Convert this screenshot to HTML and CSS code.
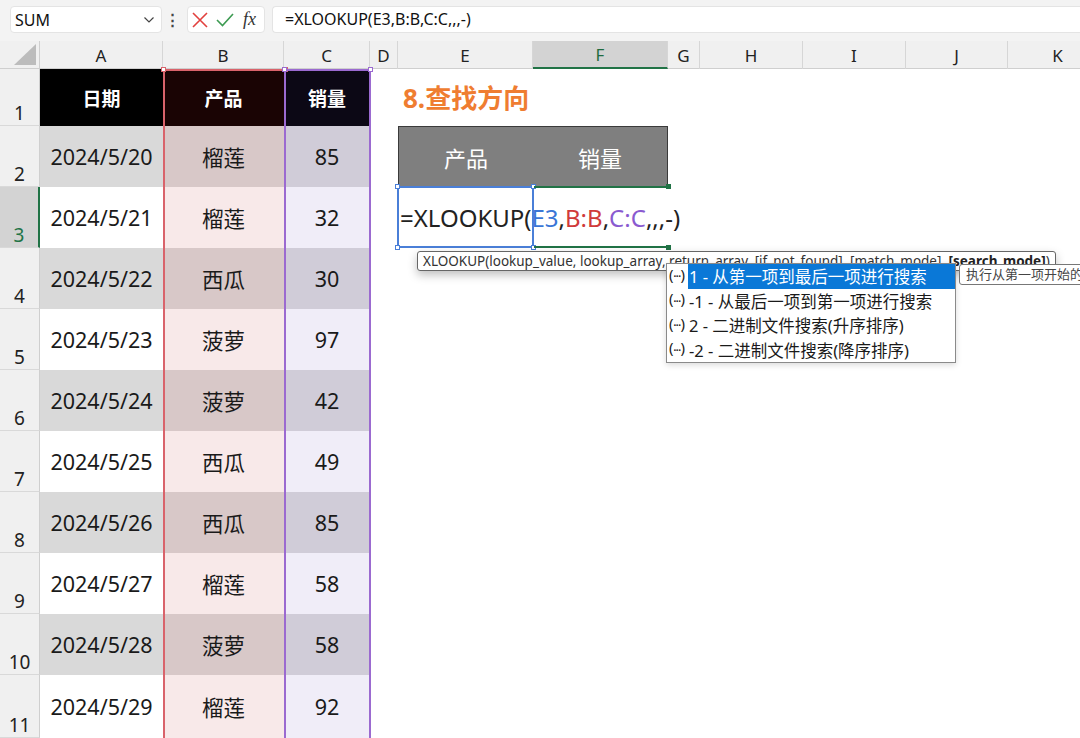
FILE: index.html
```html
<!DOCTYPE html>
<html lang="zh">
<head>
<meta charset="utf-8">
<link rel="stylesheet" href="styles.css">
</head>
<body>
<div class="app">
  <div class="toolbar">
    <div class="namebox"><span>SUM</span>
      <svg class="chev" width="12" height="8" viewBox="0 0 12 8"><path d="M1.5 1.5 L6 6 L10.5 1.5" fill="none" stroke="#444" stroke-width="1.2"/></svg>
    </div>
    <div class="dots">⋮</div>
    <div class="fxbox">
      <svg width="18" height="18" viewBox="0 0 18 18"><path d="M2 2 L16 16 M16 2 L2 16" stroke="#e2413e" stroke-width="1.6" fill="none"/></svg>
      <svg width="20" height="18" viewBox="0 0 20 18"><path d="M2 9 L7.5 14.5 L18 3" stroke="#3d9b52" stroke-width="1.6" fill="none"/></svg>
      <span class="fx">fx</span>
    </div>
    <div class="formula">=XLOOKUP(E3,B:B,C:C,,,-)</div>
  </div>

  <div class="sheet">
    <div class="row colhead">
      <div class="corner"><svg width="40" height="28" viewBox="0 0 40 28"><path d="M14 24 L36 24 L36 3 Z" fill="#bcbcbc"/></svg></div>
      <div class="ch">A</div><div class="ch">B</div><div class="ch">C</div><div class="ch">D</div>
      <div class="ch">E</div><div class="ch sel">F</div><div class="ch">G</div><div class="ch">H</div>
      <div class="ch">I</div><div class="ch">J</div><div class="ch">K</div>
    </div>

    <div class="row r1">
      <div class="rh">1</div>
      <div class="c hA">日期</div><div class="c hB">产品</div><div class="c hC">销量</div>
      <div class="d"></div>
      <div class="title">8.查找方向</div>
    </div>

    <div class="row dark">
      <div class="rh">2</div>
      <div class="c a">2024/5/20</div><div class="c b">榴莲</div><div class="c cc">85</div>
      <div class="d"></div>
      <div class="hdr left">产品</div><div class="hdr right">销量</div>
      <div class="rest"></div>
    </div>

    <div class="row light">
      <div class="rh active">3</div>
      <div class="c a">2024/5/21</div><div class="c b">榴莲</div><div class="c cc">32</div>
      <div class="d"></div>
      <div class="ftext">=XLOOKUP(<span class="refE">E3</span>,<span class="refB">B:B</span>,<span class="refC">C:C</span>,,,-)</div>
    </div>

    <div class="row dark">
      <div class="rh">4</div>
      <div class="c a">2024/5/22</div><div class="c b">西瓜</div><div class="c cc">30</div>
    </div>
    <div class="row light">
      <div class="rh">5</div>
      <div class="c a">2024/5/23</div><div class="c b">菠萝</div><div class="c cc">97</div>
    </div>
    <div class="row dark">
      <div class="rh">6</div>
      <div class="c a">2024/5/24</div><div class="c b">菠萝</div><div class="c cc">42</div>
    </div>
    <div class="row light">
      <div class="rh">7</div>
      <div class="c a">2024/5/25</div><div class="c b">西瓜</div><div class="c cc">49</div>
    </div>
    <div class="row dark">
      <div class="rh">8</div>
      <div class="c a">2024/5/26</div><div class="c b">西瓜</div><div class="c cc">85</div>
    </div>
    <div class="row light">
      <div class="rh">9</div>
      <div class="c a">2024/5/27</div><div class="c b">榴莲</div><div class="c cc">58</div>
    </div>
    <div class="row dark">
      <div class="rh">10</div>
      <div class="c a">2024/5/28</div><div class="c b">菠萝</div><div class="c cc">58</div>
    </div>
    <div class="row light last">
      <div class="rh">11</div>
      <div class="c a">2024/5/29</div><div class="c b">榴莲</div><div class="c cc">92</div>
    </div>

    <!-- reference highlight overlays -->
    <div class="hl hlB"><i class="h tl"></i><i class="h tr"></i></div>
    <div class="hl hlC"><i class="h tl"></i><i class="h tr"></i></div>
    <div class="selE"><i class="h tl"></i><i class="h tr"></i><i class="h bl"></i><i class="h br"></i></div>
    <div class="selF"><i class="g tr"></i><i class="g br"></i></div>

    <div class="tip">XLOOKUP(lookup_value, lookup_array, return_array, [if_not_found], [match_mode], <b>[search_mode]</b>)</div>
    <div class="menu">
      <div class="item on"><span class="ic">(<em>...</em>)</span><span class="tx">1 - 从第一项到最后一项进行搜索</span></div>
      <div class="item"><span class="ic">(<em>...</em>)</span><span class="tx">-1 - 从最后一项到第一项进行搜索</span></div>
      <div class="item"><span class="ic">(<em>...</em>)</span><span class="tx">2 - 二进制文件搜索(升序排序)</span></div>
      <div class="item"><span class="ic">(<em>...</em>)</span><span class="tx">-2 - 二进制文件搜索(降序排序)</span></div>
    </div>
    <div class="tip2">执行从第一项开始的搜索</div>
  </div>
</div>
</body>
</html>
```

FILE: styles.css
```css
html, body { margin: 0; padding: 0; background: #fff; }
.app {
  width: 1080px; height: 738px; overflow: hidden; position: relative;
  font-family: "Noto Sans", "Noto Sans CJK SC", sans-serif; color: #1a1a1a;
}
.toolbar {
  height: 41px; box-sizing: border-box; background: #f3f3f3;
  display: flex; align-items: flex-start; padding: 6px 0 0 10px;
}
.namebox {
  width: 152px; height: 27px; box-sizing: border-box; background: #fff;
  border: 1px solid #e4e4e4; border-radius: 4px;
  display: flex; align-items: center; justify-content: space-between;
  padding: 0 6px 0 4px; font-size: 16px; color: #111;
}
.dots { width: 20px; margin-right: 5px; text-align: center; font-size: 15px; line-height: 27px; color: #444; font-weight: bold; }
.fxbox {
  width: 78px; height: 27px; box-sizing: border-box; background: #fff;
  border: 1px solid #e4e4e4; border-radius: 4px;
  display: flex; align-items: center; gap: 6px; padding-left: 3px;
}
.fx { font-family: "Liberation Serif", serif; font-style: italic; font-size: 18px; color: #333; margin-left: 2px; }
.formula {
  flex: 1; margin-left: 7px; height: 27px; box-sizing: border-box; background: #fff;
  border: 1px solid #e4e4e4; border-right: none; border-radius: 4px 0 0 4px;
  padding-left: 12px; font-size: 16px; line-height: 25px; color: #111;
}

.sheet { position: relative; }
.row {
  display: grid;
  grid-template-columns: 40px 123px 121px 86px 28px 135px 135px 32px 103px 103px 102px 100px;
  height: 61px;
}
.row.last { height: 63px; }
.colhead { height: 28px; background: #f0f0f0; border-bottom: 1px solid #cfcfcf; box-sizing: border-box; }
.corner { border-right: 1px solid #cfcfcf; }
.corner svg { display: block; }
.ch {
  border-right: 1px solid #d6d6d6; display: flex; align-items: center; justify-content: center;
  font-size: 17px; color: #222;
}
.ch.sel { background: #d3d3d3; color: #1f6b3f; border-bottom: 2px solid #217346; }
.r1 { height: 57px; }
.rh {
  background: #f0f0f0; border-right: 1px solid #cfcfcf; border-bottom: 1px solid #d9d9d9;
  box-sizing: border-box; display: flex; align-items: flex-end; justify-content: center;
  font-size: 19px; color: #222; padding-bottom: 0; line-height: 24px;
}
.rh.active { background: #d3d3d3; color: #217346; border-right: 2px solid #217346; }
.c { display: flex; align-items: center; justify-content: center; font-size: 21.5px; color: #1a1a1a; }
.hA { background: #000; color: #fff; font-weight: bold; font-size: 19px; }
.hB { background: #1a0404; color: #fff; font-weight: bold; font-size: 19px; }
.hC { background: #0c0815; color: #fff; font-weight: bold; font-size: 19px; }
.dark .a { background: #d9d9d9; }
.dark .b { background: #d8c8c8; }
.dark .cc { background: #d0ccd8; }
.light .a { background: #fff; }
.light .b { background: #f8e9e9; }
.light .cc { background: #f0edf8; }

.title {
  grid-column: 6 / 13; display: flex; align-items: center; padding-left: 5px;
  font-size: 26px; font-weight: bold; color: #ef7d31; padding-bottom: 2px;
}
.hdr {
  background: #7f7f7f; color: #fff; font-size: 22px;
  display: flex; align-items: center; justify-content: center;
  border-top: 1px solid #3a3a3a; border-bottom: 1px solid #3a3a3a; box-sizing: border-box;
}
.hdr.left { border-left: 1px solid #3a3a3a; }
.hdr.right { border-right: 1px solid #3a3a3a; }
.ftext {
  grid-column: 6 / 13; display: flex; align-items: center; padding-left: 2px;
  font-size: 24px; color: #222; white-space: nowrap;
}
.refE { color: #3a76d6; }
.refB { color: #d03a3a; }
.refC { color: #8a5ad0; }

.hl { position: absolute; top: 28px; height: 720px; box-sizing: border-box; pointer-events: none; }
.hlB { left: 163px; width: 123px; border: 2px solid #d9636b; color: #d9636b; }
.hlC { left: 284px; width: 87px; border: 2px solid #9b6ad0; color: #9b6ad0; }
.h { position: absolute; width: 5px; height: 5px; background: #fff; border: 1px solid currentColor; box-sizing: border-box; }
.h.tl { left: -4px; top: -4px; }
.h.tr { right: -4px; top: -4px; }
.h.bl { left: -4px; bottom: -4px; }
.h.br { right: -4px; bottom: -4px; }
.selE {
  position: absolute; left: 397px; top: 145px; width: 137px; height: 62px; box-sizing: border-box;
  border: 2px solid #4a7fd8; color: #4a7fd8;
}
.selF {
  position: absolute; left: 534px; top: 145px; width: 134px; height: 62px; box-sizing: border-box;
  border-top: 2px solid #217346; border-bottom: 2px solid #217346; color: #217346;
}
.g { position: absolute; width: 5px; height: 5px; background: #217346; }
.g.tr { right: -3px; top: -4px; }
.g.br { right: -3px; bottom: -4px; }

.tip {
  position: absolute; left: 417px; top: 210px; height: 20px; box-sizing: border-box;
  padding: 0 5px; background: #fff; border: 1px solid #666; border-radius: 3px;
  font-size: 13.5px; line-height: 18px; color: #333; white-space: nowrap;
  box-shadow: 0 4px 10px rgba(0,0,0,0.25);
}
.tip b { color: #222; }
.menu {
  position: absolute; left: 666px; top: 222px; width: 290px; box-sizing: border-box;
  background: #fff; border: 1px solid #8a8a8a; padding: 0;
  box-shadow: 0 2px 6px rgba(0,0,0,0.15);
}
.item { display: flex; align-items: center; height: 24.5px; white-space: nowrap; }
.ic {
  width: 21px; flex: none; font-size: 15px; color: #222; padding-left: 2px; box-sizing: border-box;
  display: flex; align-items: center; line-height: 1; position: relative; top: -2px;
}
.ic em { font-style: normal; font-size: 10px; letter-spacing: -0.5px; font-weight: bold; position: relative; top: -1px; }
.tx { font-size: 16.5px; color: #1a1a1a; height: 100%; display: flex; align-items: center; flex: 1; padding-left: 1px; }
.item.on .tx { background: #0a78d7; color: #fff; }
.tip2 {
  position: absolute; left: 959px; top: 223px; height: 21px; box-sizing: border-box;
  padding: 0 6px; background: #fff; border: 1px solid #777; border-radius: 3px;
  font-size: 13px; line-height: 19px; color: #444; white-space: nowrap;
}
```
